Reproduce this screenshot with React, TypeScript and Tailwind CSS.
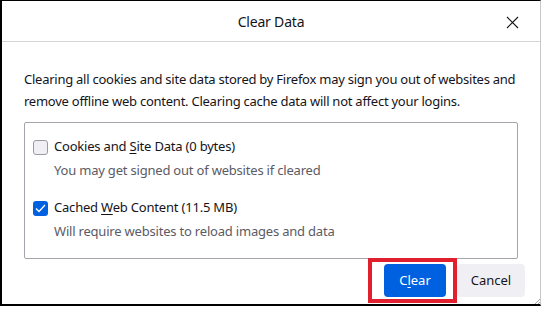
import React from 'react';

const font = { fontFamily: '"Noto Sans", "Open Sans", sans-serif' };

function CheckRow({ checked, label, hint }: { checked: boolean; label: React.ReactNode; hint: string }) {
  return (
    <div className="flex flex-col">
      <div className="flex items-center h-[18px]">
        {checked ? (
          <span className="w-[15px] h-[15px] rounded-[3px] bg-[#0061e0] flex items-center justify-center">
            <svg width="11" height="9" viewBox="0 0 11 9" fill="none">
              <path d="M1 4.5L4 7.5L10 1" stroke="white" strokeWidth="1.3" />
            </svg>
          </span>
        ) : (
          <span className="w-[15px] h-[15px] rounded-[3px] border border-[#9a9aa4] bg-[#f0f0f4]" />
        )}
        <span className="ml-[6px] text-[13px] tracking-[-0.2px] text-[#15141a]">{label}</span>
      </div>
      <div className="ml-[21px] mt-[5px] text-[13px] tracking-[-0.2px] text-[#5b5b66] leading-[18px]">{hint}</div>
    </div>
  );
}

export default function App() {
  return (
    <div className="w-[542px] h-[321px] bg-white" style={font}>
      <div className="relative w-[541px] h-[306px] flex flex-col border-t border-l-2 border-b-2 border-black border-r border-r-[#c8c8c8] bg-white">
        <div className="relative h-[41px] shrink-0 flex items-center justify-center border-b border-[#d4d4d8]">
          <span className="text-[14px] tracking-[-0.2px] text-[#15141a]">Clear Data</span>
          <svg className="absolute right-[21px] top-[15px]" width="13" height="13" viewBox="0 0 13 13">
            <path d="M1 1L12 12M12 1L1 12" stroke="#15141a" strokeWidth="1.1" />
          </svg>
        </div>

        <div className="px-[22px] pt-[26px] shrink-0">
          <p className="h-[44px] text-[13px] leading-[22px] tracking-[-0.25px] text-[#15141a] whitespace-nowrap">
            Clearing all cookies and site data stored by Firefox may sign you out of websites and
            <br />
            remove offline web content. Clearing cache data will not affect your logins.
          </p>

          <div className="mt-[10px] h-[137px] border border-[#a5a5ad] rounded-[2px] pl-[8px] pt-[15px] flex flex-col gap-[20px]">
            <CheckRow
              checked={false}
              label={<>Cookies and <u className="underline-offset-2">S</u>ite Data (0 bytes)</>}
              hint="You may get signed out of websites if cleared"
            />
            <CheckRow
              checked={true}
              label={<>Cached <u className="underline-offset-2">W</u>eb Content (11.5 MB)</>}
              hint="Will require websites to reload images and data"
            />
          </div>
        </div>

        <div className="flex justify-end gap-[11px] pr-[15px] mt-[5px]">
          <div className="relative">
            <button className="w-[62px] h-[33px] rounded-[4px] bg-[#0061e0] text-white text-[13px]">
              C<u className="underline-offset-2">l</u>ear
            </button>
            <div className="absolute -left-[16px] -right-[11px] -top-[6px] -bottom-[6px] border-[4px] border-[#e0202e]" />
          </div>
          <button className="w-[68px] h-[33px] rounded-[4px] bg-[#f0f0f4] text-[#15141a] text-[13px]">Cancel</button>
        </div>

        <svg className="absolute right-0 bottom-0" width="6" height="6" viewBox="0 0 6 6">
          <path d="M6 1L1 6M6 4L4 6" stroke="#8a8a8a" strokeWidth="0.8" />
        </svg>
      </div>
    </div>
  );
}
